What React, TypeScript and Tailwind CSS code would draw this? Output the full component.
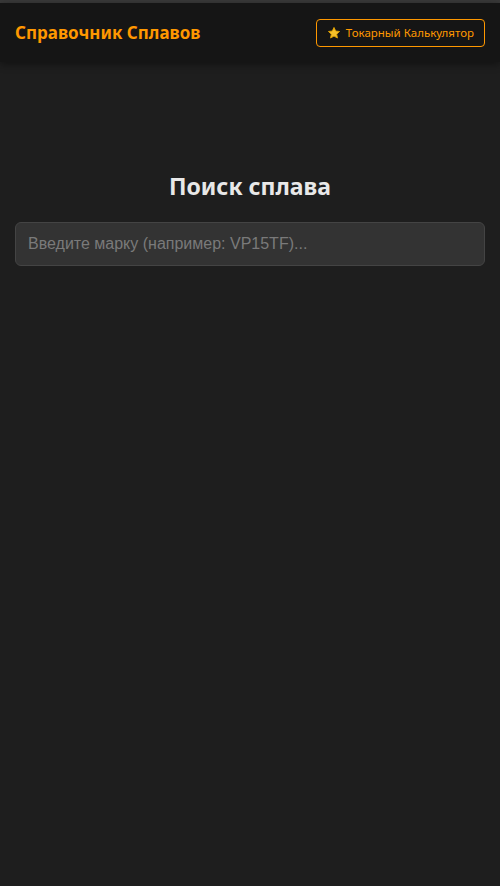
import { useState } from 'react'

function StarIcon() {
  return (
    <svg viewBox="0 0 24 24" className="h-[14px] w-[14px]" aria-hidden="true">
      <path
        d="M12 2.5l2.9 6.1 6.6.8-4.9 4.6 1.3 6.6L12 17.3l-5.9 3.3 1.3-6.6-4.9-4.6 6.6-.8z"
        fill="#f5c02b"
        stroke="#e0a000"
        strokeWidth="1.6"
        strokeLinejoin="round"
      />
    </svg>
  )
}

export default function App() {
  const [query, setQuery] = useState('')

  return (
    <div
      className="min-h-[886px] border-t-[3px] border-[#3a3a3a] bg-[#1e1e1e]"
      style={{ fontFamily: '"Noto Sans", "Open Sans", sans-serif' }}
    >
      <header className="flex h-[59px] items-center justify-between bg-[#151515] px-[15px] shadow-[0_2px_8px_rgba(0,0,0,0.45)]">
        <h1 className="text-[17px] font-bold text-[#ff9800]">Справочник Сплавов</h1>
        <button
          type="button"
          className="flex h-[28px] items-center gap-[5px] rounded-[4px] border border-[#ff9800] px-[10px] text-[11.5px] text-[#ff9800]"
        >
          <StarIcon />
          Токарный Калькулятор
        </button>
      </header>

      <main className="px-[15px] pt-[109px]">
        <h2 className="text-center text-[23px] leading-[30px] font-bold text-[#e8e8e8]">Поиск сплава</h2>
        <input
          value={query}
          onChange={(e) => setQuery(e.target.value)}
          placeholder="Введите марку (например: VP15TF)..."
          className="mt-[21px] h-[44px] w-full rounded-[6px] border border-[#444] bg-[#333] px-[12px] text-[16px] text-[#ddd] outline-none placeholder:text-[#7a7a7a]"
          style={{ fontFamily: '"Liberation Sans", Arial, sans-serif' }}
        />
      </main>
    </div>
  )
}
